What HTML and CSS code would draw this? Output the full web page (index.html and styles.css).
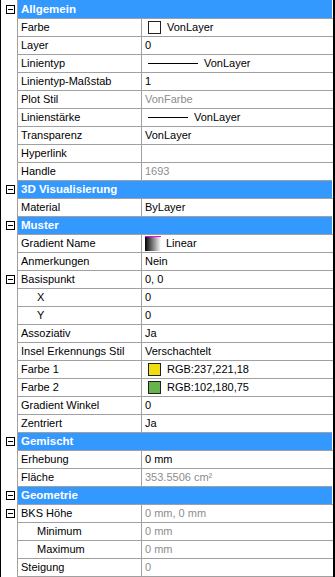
FILE: index.html
```html
<!DOCTYPE html>
<html lang="de">
<head>
    <meta charset="UTF-8">
    <title>Eigenschaften</title>
    <link rel="stylesheet" href="styles.css">
</head>
<body>
    <div class="panel">
        <div class="row">
            <div class="tog"><span class="minus"></span></div>
            <div class="body head">Allgemein</div>
        </div>
        <div class="row">
            <div class="tog"></div>
            <div class="body"><div class="label">Farbe</div><div class="value"><span class="swatch"></span>VonLayer</div></div>
        </div>
        <div class="row">
            <div class="tog"></div>
            <div class="body"><div class="label">Layer</div><div class="value">0</div></div>
        </div>
        <div class="row">
            <div class="tog"></div>
            <div class="body"><div class="label">Linientyp</div><div class="value"><span class="ltype"></span>VonLayer</div></div>
        </div>
        <div class="row">
            <div class="tog"></div>
            <div class="body"><div class="label">Linientyp-Maßstab</div><div class="value">1</div></div>
        </div>
        <div class="row">
            <div class="tog"></div>
            <div class="body"><div class="label">Plot Stil</div><div class="value dim">VonFarbe</div></div>
        </div>
        <div class="row">
            <div class="tog"></div>
            <div class="body"><div class="label">Linienstärke</div><div class="value"><span class="ltype short"></span>VonLayer</div></div>
        </div>
        <div class="row">
            <div class="tog"></div>
            <div class="body"><div class="label">Transparenz</div><div class="value">VonLayer</div></div>
        </div>
        <div class="row">
            <div class="tog"></div>
            <div class="body"><div class="label">Hyperlink</div><div class="value"></div></div>
        </div>
        <div class="row">
            <div class="tog"></div>
            <div class="body"><div class="label">Handle</div><div class="value dim">1693</div></div>
        </div>

        <div class="row">
            <div class="tog"><span class="minus"></span></div>
            <div class="body head">3D Visualisierung</div>
        </div>
        <div class="row">
            <div class="tog"></div>
            <div class="body"><div class="label">Material</div><div class="value">ByLayer</div></div>
        </div>

        <div class="row">
            <div class="tog"><span class="minus"></span></div>
            <div class="body head">Muster</div>
        </div>
        <div class="row">
            <div class="tog"></div>
            <div class="body"><div class="label">Gradient Name</div><div class="value"><span class="grad"></span>Linear</div></div>
        </div>
        <div class="row">
            <div class="tog"></div>
            <div class="body"><div class="label">Anmerkungen</div><div class="value">Nein</div></div>
        </div>
        <div class="row">
            <div class="tog"><span class="minus"></span></div>
            <div class="body"><div class="label">Basispunkt</div><div class="value">0, 0</div></div>
        </div>
        <div class="row">
            <div class="tog"></div>
            <div class="body"><div class="label sub">X</div><div class="value">0</div></div>
        </div>
        <div class="row">
            <div class="tog"></div>
            <div class="body"><div class="label sub">Y</div><div class="value">0</div></div>
        </div>
        <div class="row">
            <div class="tog"></div>
            <div class="body"><div class="label">Assoziativ</div><div class="value">Ja</div></div>
        </div>
        <div class="row">
            <div class="tog"></div>
            <div class="body"><div class="label">Insel Erkennungs Stil</div><div class="value">Verschachtelt</div></div>
        </div>
        <div class="row">
            <div class="tog"></div>
            <div class="body"><div class="label">Farbe 1</div><div class="value"><span class="swatch yellow"></span>RGB:237,221,18</div></div>
        </div>
        <div class="row">
            <div class="tog"></div>
            <div class="body"><div class="label">Farbe 2</div><div class="value"><span class="swatch green"></span>RGB:102,180,75</div></div>
        </div>
        <div class="row">
            <div class="tog"></div>
            <div class="body"><div class="label">Gradient Winkel</div><div class="value">0</div></div>
        </div>
        <div class="row">
            <div class="tog"></div>
            <div class="body"><div class="label">Zentriert</div><div class="value">Ja</div></div>
        </div>

        <div class="row">
            <div class="tog"><span class="minus"></span></div>
            <div class="body head">Gemischt</div>
        </div>
        <div class="row">
            <div class="tog"></div>
            <div class="body"><div class="label">Erhebung</div><div class="value">0 mm</div></div>
        </div>
        <div class="row">
            <div class="tog"></div>
            <div class="body"><div class="label">Fläche</div><div class="value dim">353.5506 cm²</div></div>
        </div>

        <div class="row">
            <div class="tog"><span class="minus"></span></div>
            <div class="body head">Geometrie</div>
        </div>
        <div class="row">
            <div class="tog"><span class="minus"></span></div>
            <div class="body"><div class="label">BKS Höhe</div><div class="value dim">0 mm, 0 mm</div></div>
        </div>
        <div class="row">
            <div class="tog"></div>
            <div class="body"><div class="label sub">Minimum</div><div class="value dim">0 mm</div></div>
        </div>
        <div class="row">
            <div class="tog"></div>
            <div class="body"><div class="label sub">Maximum</div><div class="value dim">0 mm</div></div>
        </div>
        <div class="row">
            <div class="tog"></div>
            <div class="body"><div class="label">Steigung</div><div class="value dim">0</div></div>
        </div>
    </div>
</body>
</html>
```

FILE: styles.css
```css
body {
    margin: 0;
    background-color: #ffffff;
    font-family: 'Liberation Sans', Arial, sans-serif;
    font-size: 11px;
    color: #000000;
}
.panel {
    width: 332px;
    border-left: 1px solid #000000;
    border-right: 2px solid #000000;
}
.row {
    display: flex;
}
.tog {
    width: 16px;
    flex: none;
    display: flex;
    align-items: center;
    justify-content: center;
}
/* collapse box */
.minus {
    width: 7px;
    height: 7px;
    border: 1px solid #000000;
    position: relative;
    margin-left: 2px;
}
.minus::after {
    content: '';
    position: absolute;
    left: 1px;
    top: 3px;
    width: 5px;
    height: 1px;
    background-color: #000000;
}
.body {
    flex: 1;
    display: flex;
    height: 17px;
    line-height: 17px;
    border-left: 1px solid #a0a0a0;
    border-top: 1px solid #a0a0a0;
}
.row:first-child .body {
    border-top: none;
    height: 18px;
    line-height: 18px;
}
.row:last-child .body {
    border-bottom: 1px solid #a0a0a0;
}
.head {
    background-color: #3399ff;
    color: #ffffff;
    font-weight: bold;
    font-size: 11.5px;
    padding-left: 3px;
    margin-right: 1px;
}
.label {
    width: 120px;
    flex: none;
    padding-left: 3px;
    border-right: 1px solid #a0a0a0;
    white-space: nowrap;
    overflow: hidden;
}
.label.sub {
    padding-left: 19px;
    width: 104px;
}
.value {
    flex: 1;
    display: flex;
    align-items: center;
    padding-left: 3px;
    white-space: nowrap;
}
.dim {
    color: #8d8d8d;
}
.swatch {
    width: 11px;
    height: 11px;
    border: 1px solid #202020;
    background-color: #ffffff;
    margin-left: 3px;
    margin-right: 6px;
    flex: none;
}
.swatch.yellow {
    background-color: rgb(237, 221, 18);
}
.swatch.green {
    background-color: rgb(102, 180, 75);
}
.ltype {
    width: 50px;
    height: 1px;
    background-color: #000000;
    margin-left: 3px;
    margin-right: 6px;
    flex: none;
}
.ltype.short {
    width: 40px;
}
.grad {
    width: 16px;
    height: 15px;
    border-top: 1px solid #ff00ff;
    box-sizing: border-box;
    background: linear-gradient(to right, #000000, #ffffff);
    margin-right: 5px;
    flex: none;
}
```
